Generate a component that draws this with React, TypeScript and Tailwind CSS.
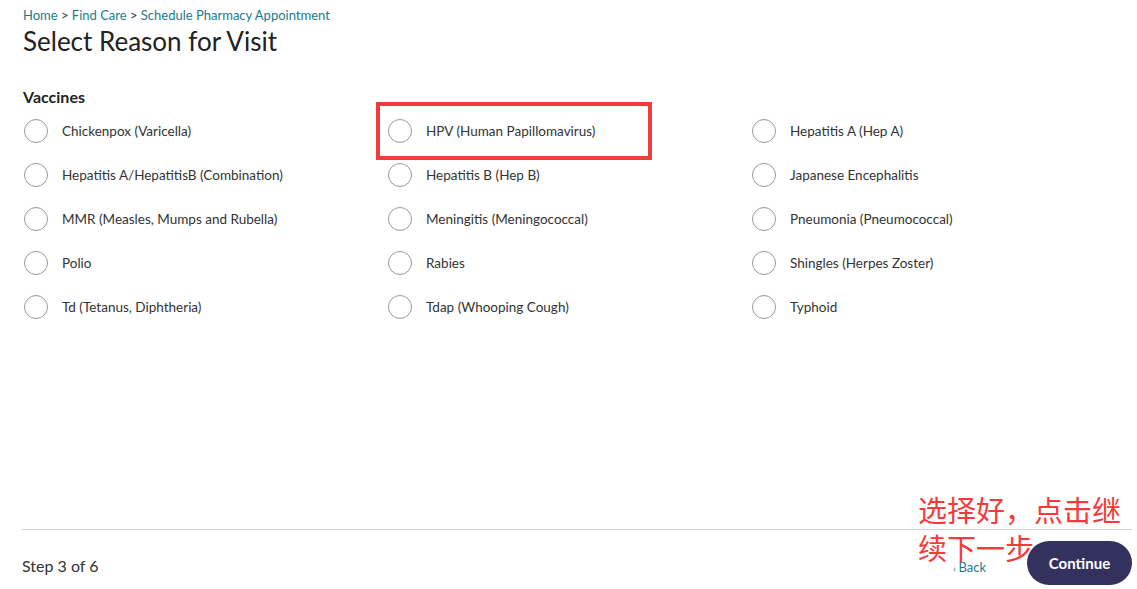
import React from "react";

const cols: string[][] = [
  [
    "Chickenpox (Varicella)",
    "Hepatitis A/HepatitisB (Combination)",
    "MMR (Measles, Mumps and Rubella)",
    "Polio",
    "Td (Tetanus, Diphtheria)",
  ],
  [
    "HPV (Human Papillomavirus)",
    "Hepatitis B (Hep B)",
    "Meningitis (Meningococcal)",
    "Rabies",
    "Tdap (Whooping Cough)",
  ],
  [
    "Hepatitis A (Hep A)",
    "Japanese Encephalitis",
    "Pneumonia (Pneumococcal)",
    "Shingles (Herpes Zoster)",
    "Typhoid",
  ],
];

function Option({ label, highlight }: { label: string; highlight?: boolean }) {
  return (
    <label className="relative flex h-[44px] items-center">
      {highlight && (
        <div className="pointer-events-none absolute left-[-11px] top-[-7px] h-[58px] w-[276px] border-4 border-[#f43b3b]" />
      )}
      <span className="ml-[1px] h-[24px] w-[24px] shrink-0 rounded-full border border-[#9a9a9a] bg-white" />
      <span className="ml-[14px] text-[13.5px] text-[#333]">{label}</span>
    </label>
  );
}

export default function App() {
  return (
    <div
      className="relative h-[589px] w-[1137px] overflow-hidden bg-white"
      style={{ fontFamily: "Lato, 'Noto Sans', sans-serif" }}
    >
      <div className="px-[23px] pt-[6px]">
        <div className="text-[13px] leading-[18px] text-[#1d7a8c]">
          <span>Home</span>
          <span className="text-[#333]"> &gt; </span>
          <span>Find Care</span>
          <span className="text-[#333]"> &gt; </span>
          <span>Schedule Pharmacy Appointment</span>
        </div>
        <h1 className="mt-[0px] text-[26px] leading-[34px] text-[#222]">Select Reason for Visit</h1>
        <h2 className="mt-[29px] text-[16px] font-bold leading-[20px] text-[#222]">Vaccines</h2>
        <div className="mt-[2px] grid grid-cols-[364px_364px_364px]">
          {cols.map((c, ci) => (
            <div key={ci} className="flex flex-col">
              {c.map((l, i) => (
                <Option key={l} label={l} highlight={ci === 1 && i === 0} />
              ))}
            </div>
          ))}
        </div>
      </div>

      <div className="absolute left-[22px] right-[5px] top-[529px] border-t border-[#d4d4d4]" />
      <div className="absolute left-[22px] right-[5px] top-[541px] flex h-[44px] items-center">
        <div className="flex-1 pt-[5px] text-[16px] text-[#333]">Step 3 of 6</div>
        <div className="mr-[41px] pt-[10px] text-[13px] text-[#1d7a8c]">
          <span className="text-[10px]">‹ </span>Back
        </div>
        <button className="h-[44px] w-[105px] rounded-full bg-[#33325f] text-[15px] font-bold text-white">
          Continue
        </button>
      </div>

      <div
        className="pointer-events-none absolute left-[918px] top-[490px] w-[212px] text-[29px] leading-[38px] text-[#f43b3b]"
        style={{ fontFamily: "'Noto Sans CJK SC', sans-serif" }}
      >
        选择好，点击继续下一步
      </div>
    </div>
  );
}
